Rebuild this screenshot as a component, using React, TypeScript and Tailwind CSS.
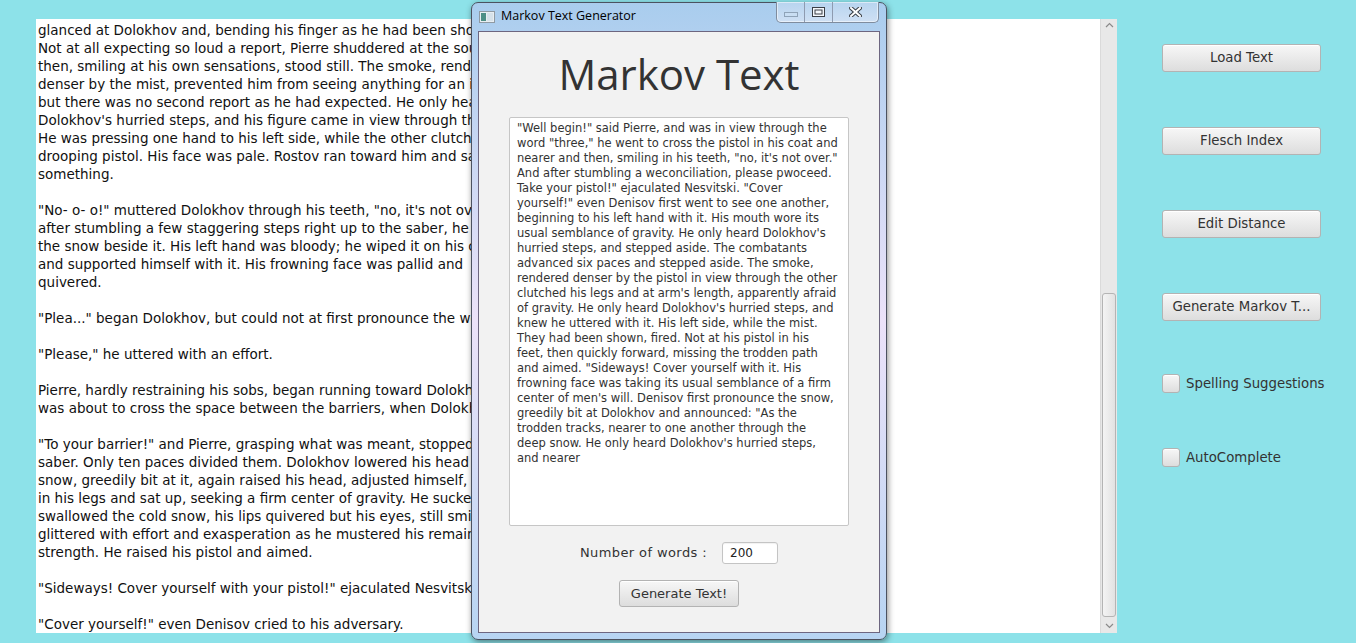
import React from 'react';

const sourceLines = [
  'glanced at Dolokhov and, bending his finger as he had been shown, fired.',
  'Not at all expecting so loud a report, Pierre shuddered at the sound and',
  'then, smiling at his own sensations, stood still. The smoke, rendered',
  'denser by the mist, prevented him from seeing anything for an instant,',
  'but there was no second report as he had expected. He only heard',
  "Dolokhov's hurried steps, and his figure came in view through the smoke.",
  'He was pressing one hand to his left side, while the other clutched his',
  'drooping pistol. His face was pale. Rostov ran toward him and said',
  'something.',
  '',
  '"No- o- o!" muttered Dolokhov through his teeth, "no, it\'s not over," and',
  'after stumbling a few staggering steps right up to the saber, he sank on',
  'the snow beside it. His left hand was bloody; he wiped it on his coat',
  'and supported himself with it. His frowning face was pallid and',
  'quivered.',
  '',
  '"Plea..." began Dolokhov, but could not at first pronounce the word.',
  '',
  '"Please," he uttered with an effort.',
  '',
  'Pierre, hardly restraining his sobs, began running toward Dolokhov and',
  'was about to cross the space between the barriers, when Dolokhov cried:',
  '',
  '"To your barrier!" and Pierre, grasping what was meant, stopped by his',
  'saber. Only ten paces divided them. Dolokhov lowered his head to the',
  'snow, greedily bit at it, again raised his head, adjusted himself, drew',
  'in his legs and sat up, seeking a firm center of gravity. He sucked and',
  'swallowed the cold snow, his lips quivered but his eyes, still smiling,',
  'glittered with effort and exasperation as he mustered his remaining',
  'strength. He raised his pistol and aimed.',
  '',
  '"Sideways! Cover yourself with your pistol!" ejaculated Nesvitski.',
  '',
  '"Cover yourself!" even Denisov cried to his adversary.',
];

const markovLines = [
  '"Well begin!" said Pierre, and was in view through the',
  'word "three," he went to cross the pistol in his coat and',
  'nearer and then, smiling in his teeth, "no, it\'s not over."',
  'And after stumbling a weconciliation, please pwoceed.',
  'Take your pistol!" ejaculated Nesvitski. "Cover',
  'yourself!" even Denisov first went to see one another,',
  'beginning to his left hand with it. His mouth wore its',
  "usual semblance of gravity. He only heard Dolokhov's",
  'hurried steps, and stepped aside. The combatants',
  'advanced six paces and stepped aside. The smoke,',
  'rendered denser by the pistol in view through the other',
  "clutched his legs and at arm's length, apparently afraid",
  "of gravity. He only heard Dolokhov's hurried steps, and",
  'knew he uttered with it. His left side, while the mist.',
  'They had been shown, fired. Not at his pistol in his',
  'feet, then quickly forward, missing the trodden path',
  'and aimed. "Sideways! Cover yourself with it. His',
  'frowning face was taking its usual semblance of a firm',
  "center of men's will. Denisov first pronounce the snow,",
  'greedily bit at Dolokhov and announced: "As the',
  'trodden tracks, nearer to one another through the',
  "deep snow. He only heard Dolokhov's hurried steps,",
  'and nearer',
];

const sideButtons = ['Load Text', 'Flesch Index', 'Edit Distance', 'Generate Markov T...'];
const checks = ['Spelling Suggestions', 'AutoComplete'];

const fxButton =
  'rounded-[3px] border border-[#b3b3b3] bg-gradient-to-b from-[#f7f7f7] to-[#dddddd] text-[#333] shadow-[inset_0_1px_0_#ffffff]';

const Scrollbar = () => (
  <div className="flex w-[17px] flex-col items-center border-l border-[#dadada] bg-[#e8e8e8]">
    <svg width="9" height="6" viewBox="0 0 9 6" className="mt-[3px]">
      <path d="M1 5 L4.5 1.5 L8 5" fill="none" stroke="#8a8a8a" strokeWidth="1.2" />
    </svg>
    <div className="mt-[265px] h-[324px] w-[14px] rounded-[3px] border border-[#b4b4b4] bg-gradient-to-r from-[#f4f4f4] to-[#e2e2e2]" />
    <svg width="9" height="6" viewBox="0 0 9 6" className="mt-[6px]">
      <path d="M1 1 L4.5 4.5 L8 1" fill="none" stroke="#8a8a8a" strokeWidth="1.2" />
    </svg>
  </div>
);

const AppIcon = () => (
  <svg width="16" height="12" viewBox="0 0 16 12">
    <rect x="0.5" y="0.5" width="15" height="11" fill="#e8eef2" stroke="#8f9aa3" />
    <rect x="2" y="2" width="5" height="8" fill="#4d8f86" />
    <rect x="8" y="2" width="6" height="8" fill="#d6e2ea" />
  </svg>
);

const CaptionButtons = () => (
  <div className="absolute right-[7px] top-[-1px] flex h-[21px] overflow-hidden rounded-b-[5px] border border-t-0 border-[#7f8c9e] bg-gradient-to-b from-[#b7d4ef] to-[#cfe0f4] shadow-[inset_0_0_0_1px_rgba(255,255,255,0.5)]">
    <div className="flex w-[28px] items-center justify-center border-r border-[#8e9bb0]">
      <svg width="14" height="5" viewBox="0 0 14 5" className="mt-[4px]">
        <rect x="0.5" y="0.5" width="13" height="4" fill="#c9def3" stroke="#8fa3b8" />
      </svg>
    </div>
    <div className="flex w-[28px] items-center justify-center border-r border-[#8e9bb0]">
      <svg width="13" height="10" viewBox="0 0 13 10">
        <rect x="0.5" y="0.5" width="12" height="9" fill="#f4f8fc" stroke="#3a3f46" />
        <rect x="3" y="3" width="7" height="4" fill="none" stroke="#3a3f46" />
      </svg>
    </div>
    <div className="flex w-[45px] items-center justify-center">
      <svg width="13" height="10" viewBox="0 0 13 10">
        <path d="M2 1 L11 9 M11 1 L2 9" stroke="#3d434b" strokeWidth="4" strokeLinecap="square" />
        <path d="M2 1 L11 9 M11 1 L2 9" stroke="#ffffff" strokeWidth="2" strokeLinecap="square" />
      </svg>
    </div>
  </div>
);

const MarkovWindow = () => (
  <div className="absolute left-[471px] top-[2px] flex h-[638px] w-[416px] flex-col rounded-[7px] border border-[#4c5260] bg-gradient-to-b from-[#a9cdee] via-[#ece2f9] to-[#b7d4f2] px-[6px] pb-[6px] shadow-[1px_2px_6px_rgba(0,0,0,0.45)]">
    <CaptionButtons />
    <div className="flex h-[28px] items-center gap-[6px] pl-[1px] pb-[1px]">
      <AppIcon />
      <span className="font-['Open_Sans',sans-serif] text-[12.5px] text-black">Markov Text Generator</span>
    </div>
    <div className="flex flex-1 flex-col items-center border border-[#6d6680] bg-[#f2f2f2]">
      <h1 className="mt-[21px] h-[42px] font-['Open_Sans',sans-serif] text-[42px] leading-none text-[#333]">
        Markov Text
      </h1>
      <div className="mt-[22px] h-[409px] w-[340px] rounded-[2px] border border-[#c6c6c6] bg-white pl-[7px] pt-[3px] font-['DejaVu_Sans',sans-serif] text-[11.5px] leading-[15px] text-[#333]">
        {markovLines.map((line, i) => (
          <div key={i} className="whitespace-nowrap">
            {line}
          </div>
        ))}
      </div>
      <div className="mt-[16px] flex h-[22px] items-center gap-[15px]">
        <span className="font-['DejaVu_Sans',sans-serif] text-[13px] tracking-[0.4px] text-[#333]">
          Number of words :
        </span>
        <div className="flex h-[22px] w-[56px] items-center rounded-[3px] border border-[#c4c4c4] bg-white pl-[7px] font-['DejaVu_Sans',sans-serif] text-[12px] text-[#222] shadow-[inset_0_1px_1px_rgba(0,0,0,0.06)]">
          200
        </div>
      </div>
      <button
        className={`mt-[16px] h-[27px] w-[120px] font-['DejaVu_Sans',sans-serif] text-[13px] ${fxButton}`}
      >
        Generate Text!
      </button>
    </div>
  </div>
);

export default function App() {
  return (
    <div className="relative h-[643px] w-[1356px] overflow-hidden bg-[#8de2e9]">
      <div className="flex pl-[36px] pt-[19px]">
        <div className="flex h-[614px]">
          <div className="w-[1064px] overflow-hidden bg-white pl-[2px] pt-[2px] font-['DejaVu_Sans',sans-serif] text-[13.5px] leading-[18px] text-[#111]">
            {sourceLines.map((line, i) => (
              <div key={i} className="h-[18px] whitespace-nowrap">
                {line}
              </div>
            ))}
          </div>
          <Scrollbar />
        </div>
        <div className="ml-[45px] flex flex-col pt-[25px] font-['DejaVu_Sans',sans-serif] text-[13.3px]">
          <div className="flex flex-col gap-[55px]">
            {sideButtons.map((label) => (
              <button key={label} className={`h-[28px] w-[159px] ${fxButton}`}>
                {label}
              </button>
            ))}
          </div>
          <div className="mt-[53px] flex flex-col gap-[55px]">
            {checks.map((label) => (
              <label key={label} className="flex h-[19px] items-center gap-[6px] whitespace-nowrap text-[#333]">
                <span className={`h-[19px] w-[18px] ${fxButton}`} />
                {label}
              </label>
            ))}
          </div>
        </div>
      </div>
      <MarkovWindow />
    </div>
  );
}
